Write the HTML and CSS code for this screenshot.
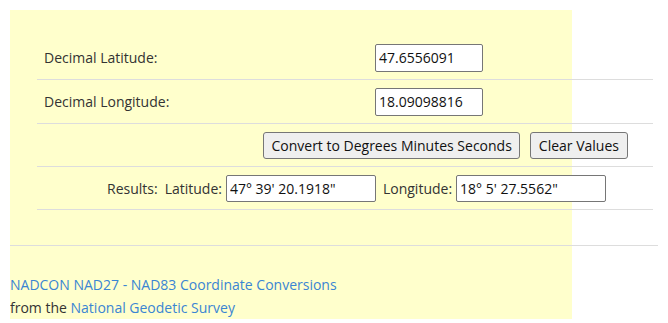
FILE: index.html
```html
<!DOCTYPE html>
<html lang="en">
  <head>
    <meta charset="UTF-8" />
    <meta name="viewport" content="width=device-width, initial-scale=1.0" />
    <title>NADCON Coordinate Conversions</title>
    <link rel="stylesheet" href="styles.css">
  </head>
  <body>
    <div class="panel">
      <div class="form">
        <div class="row">
          <label class="label" for="lat">Decimal Latitude:</label>
          <input class="coord" id="lat" type="text" value="47.6556091" />
        </div>
        <div class="row">
          <label class="label" for="lon">Decimal Longitude:</label>
          <input class="coord" id="lon" type="text" value="18.09098816" />
        </div>
        <div class="row actions">
          <button class="btn" id="convertButton">Convert to Degrees Minutes Seconds</button>
          <button class="btn" id="clearButton">Clear Values</button>
        </div>
        <div class="row results">
          <span class="results-title">Results:</span>
          <label for="latOut">Latitude:</label>
          <input class="dms" id="latOut" type="text" value="47° 39' 20.1918&quot;" />
          <label class="lon-label" for="lonOut">Longitude:</label>
          <input class="dms" id="lonOut" type="text" value="18° 5' 27.5562&quot;" />
        </div>
      </div>

      <hr class="rule" />

      <div class="footer">
        <a href="#">NADCON NAD27 - NAD83 Coordinate Conversions</a><br />
        from the <a href="#">National Geodetic Survey</a>
      </div>
    </div>
  </body>
</html>
```

FILE: styles.css
```css
body {
  margin: 10px;
  font-family: "Open Sans", sans-serif;
  font-size: 14px;
  color: #333;
}

.panel {
  width: 562px;
  background: #ffffcc;
  padding-top: 26px;
}

.form {
  margin-left: 27px;
  width: 616px;
}

.row {
  display: flex;
  align-items: center;
  height: 43px;
  border-top: 1px solid #ddd;
}

.row:first-child {
  border-top: none;
}

.row.actions,
.row.results {
  height: 42px;
}

.row.results {
  border-bottom: 1px solid #ddd;
  padding-left: 70px;
}

.label {
  width: 331px;
  padding-left: 7px;
}

input {
  font-family: "Open Sans", sans-serif;
  font-size: 14px;
  color: #111;
  height: 28px;
  box-sizing: border-box;
  border: 1px solid #767676;
  border-radius: 2px;
  padding: 0 3px;
  background: #fff;
}

.coord {
  width: 108px;
}

.actions {
  justify-content: flex-end;
  padding-right: 25px;
  gap: 10px;
}

.btn {
  font-family: "Open Sans", sans-serif;
  font-size: 14px;
  color: #111;
  height: 27px;
  padding: 0 7px;
  background: #efefef;
  border: 1px solid #767676;
  border-radius: 3px;
}

#clearButton {
  padding: 0 8px;
}

.results-title {
  margin-right: 7px;
}

.results label {
  margin-right: 4px;
}

.results .lon-label {
  margin-left: 7px;
}

.dms {
  width: 150px;
  height: 27px;
}

.rule {
  width: 650px;
  margin: 35px 0 27px;
  border: none;
  border-top: 1px solid #ddd;
}

.footer {
  line-height: 23px;
}

.footer a {
  color: #3a85d3;
  text-decoration: none;
}
```
